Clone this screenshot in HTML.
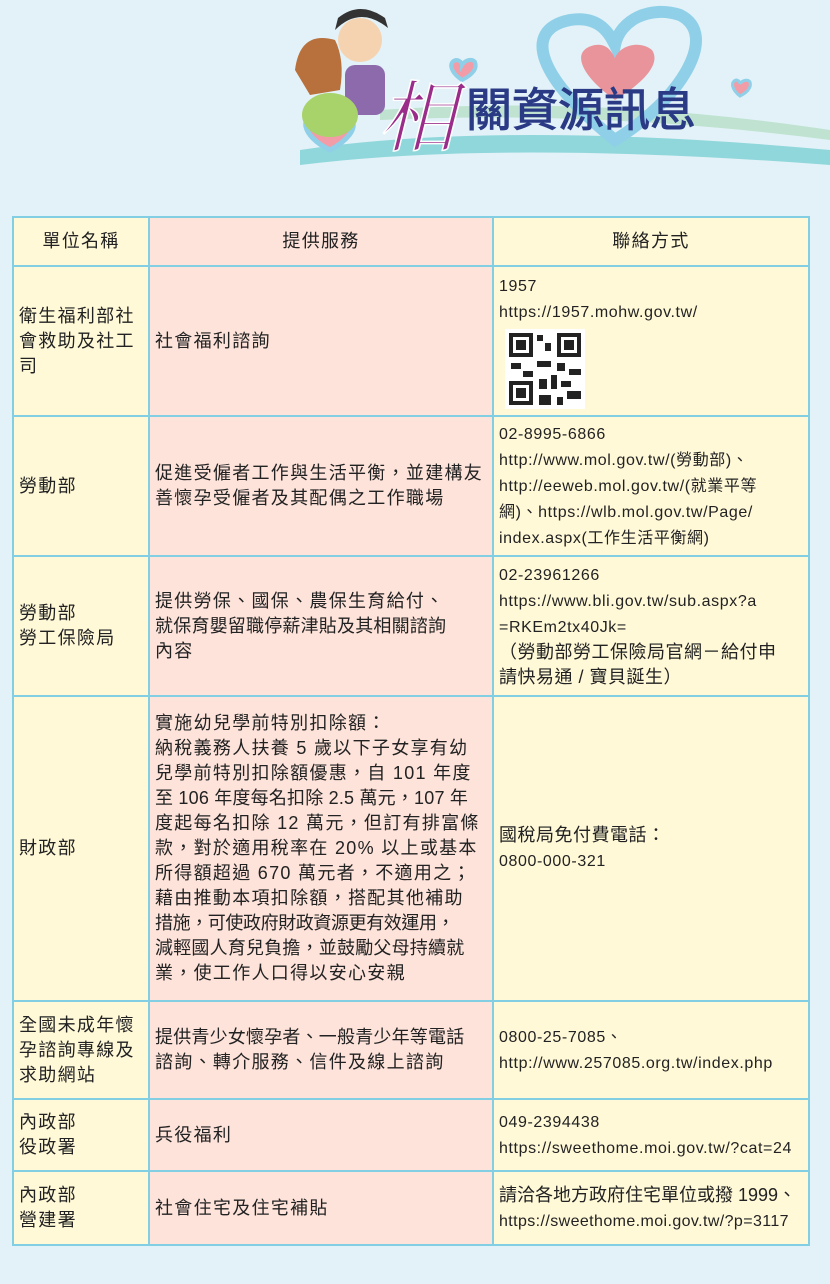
<!DOCTYPE html>
<html><head><meta charset="utf-8">
<style>
body{margin:0;width:830px;height:1284px;background:#e2f2f8;font-family:"Liberation Sans","Noto Sans CJK TC",sans-serif;color:#222;position:relative;overflow:hidden}
table{position:absolute;left:12px;top:216px;width:798px;border-collapse:collapse;table-layout:fixed}
td{border:2px solid #82cfe4;font-size:18px;line-height:25px;vertical-align:middle;padding:0 5px;letter-spacing:1.3px;white-space:nowrap;overflow:hidden}
td.a{background:#fff9d8;width:124px}
td.b{background:#fde3da;width:332px}
td.c{background:#fff9d8;letter-spacing:0.5px}
tr.h td{text-align:center;font-size:18px}
.u{font-size:16px;letter-spacing:0.6px}
.t{letter-spacing:0.2px}
</style></head><body>
<svg width="830" height="200" style="position:absolute;left:0;top:0">
<path d="M300 150 Q500 120 830 150 L830 165 Q500 140 300 165Z" fill="#7ccfd3" opacity=".8"/>
<path d="M380 110 Q600 95 830 130 L830 140 Q600 110 380 120Z" fill="#bfe3d0"/>
<path d="M615 140 C540 80 520 30 570 20 C600 15 610 35 615 45 C620 20 650 5 680 15 C720 35 680 100 615 140Z" fill="none" stroke="#8fd0e8" stroke-width="12"/>
<path d="M615 100 C580 75 570 50 595 45 C607 43 612 52 615 58 C620 45 640 40 652 50 C662 65 640 85 615 100Z" fill="#e9949a"/>
<path d="M330 150 C300 135 300 115 318 115 C326 115 330 122 330 125 C333 118 342 113 350 118 C360 128 345 142 330 150Z" fill="#f29ca8" stroke="#8fd0e8" stroke-width="5"/>
<path d="M462 80 C450 72 448 62 456 60 C460 60 462 63 462 65 C465 60 472 58 475 62 C478 70 470 76 462 80Z" fill="#f29ca8" stroke="#8fd0e8" stroke-width="4"/>
<path d="M740 96 C732 90 730 82 736 80 C739 80 740 83 740 84 C742 80 748 79 750 82 C752 88 746 93 740 96Z" fill="#f29ca8" stroke="#8fd0e8" stroke-width="3"/>
<circle cx="360" cy="40" r="22" fill="#f5d3b0"/><path d="M335 30 Q360 5 388 28 L385 18 Q360 0 338 18Z" fill="#333"/>
<path d="M295 70 Q300 30 335 40 Q345 60 340 90 L310 95Z" fill="#b8703c"/>
<rect x="345" y="65" width="40" height="50" rx="10" fill="#8c6aab"/>
<ellipse cx="330" cy="115" rx="28" ry="22" fill="#a8d26a"/>
<text x="378" y="145" font-family="Liberation Serif,Noto Serif CJK SC,serif" font-size="78" fill="#9a2d8a" font-style="italic" stroke="#fff" stroke-width="1.5">相</text>
<text x="466" y="126" font-family="Liberation Sans,Noto Sans CJK TC,sans-serif" font-size="46" fill="#2a3a85" stroke="#2a3a85" stroke-width="1">關資源訊息</text>
</svg>
<table>
<tr class="h" style="height:49px"><td class="a">單位名稱</td><td class="b">提供服務</td><td class="c" style="text-align:center;letter-spacing:1.4px;font-size:18px">聯絡方式</td></tr>
<tr style="height:150px"><td class="a">衛生福利部社<br>會救助及社工<br>司</td><td class="b">社會福利諮詢</td><td class="c"><span class="u">1957<br>https://1957.mohw.gov.tw/</span><br>
<svg width="80" height="80" style="margin:4px 0 0 6px;display:block"><rect width="80" height="80" fill="#fff"/><rect x="4" y="4" width="24" height="24" fill="#222"/><rect x="8" y="8" width="16" height="16" fill="#fff"/><rect x="11" y="11" width="10" height="10" fill="#222"/><rect x="52" y="4" width="24" height="24" fill="#222"/><rect x="56" y="8" width="16" height="16" fill="#fff"/><rect x="59" y="11" width="10" height="10" fill="#222"/><rect x="4" y="52" width="24" height="24" fill="#222"/><rect x="8" y="56" width="16" height="16" fill="#fff"/><rect x="11" y="59" width="10" height="10" fill="#222"/><path d="M32 6h6v6h-6zM40 14h6v8h-6zM32 32h14v6h-14zM52 34h8v8h-8zM64 40h12v6h-12zM34 50h8v10h-8zM46 46h6v14h-6zM56 52h10v6h-10zM62 62h14v8h-14zM34 66h12v10h-12zM52 68h6v8h-6zM6 34h10v6h-10zM18 42h10v6h-10z" fill="#222"/></svg></td></tr>
<tr style="height:140px"><td class="a">勞動部</td><td class="b">促進受僱者工作與生活平衡，並建構友<br>善懷孕受僱者及其配偶之工作職場</td><td class="c"><span class="u">02-8995-6866<br>http://www.mol.gov.tw/(勞動部)、<br>http://eeweb.mol.gov.tw/(就業平等<br>網)、https://wlb.mol.gov.tw/Page/<br>index.aspx(工作生活平衡網)</span></td></tr>
<tr style="height:140px"><td class="a">勞動部<br>勞工保險局</td><td class="b">提供勞保、國保、農保生育給付、<br><span class="t">就保育嬰留職停薪津貼及其相關諮詢</span><br>內容</td><td class="c"><span class="u">02-23961266<br>https://www.bli.gov.tw/sub.aspx?a<br>=RKEm2tx40Jk=</span><br>（勞動部勞工保險局官網－給付申<br>請快易通 / 寶貝誕生）</td></tr>
<tr style="height:305px"><td class="a">財政部</td><td class="b">實施幼兒學前特別扣除額：<br>納稅義務人扶養 5 歲以下子女享有幼<br>兒學前特別扣除額優惠，自 101 年度<br><span class="t">至 106 年度每名扣除 2.5 萬元，107 年</span><br>度起每名扣除 12 萬元，但訂有排富條<br>款，對於適用稅率在 20% 以上或基本<br>所得額超過 670 萬元者，不適用之；<br>藉由推動本項扣除額，搭配其他補助<br><span style="letter-spacing:-0.4px">措施，可使政府財政資源更有效運用，</span><br><span class="t">減輕國人育兒負擔，並鼓勵父母持續就</span><br>業，使工作人口得以安心安親</td><td class="c">國稅局免付費電話：<br><span class="u">0800-000-321</span></td></tr>
<tr style="height:98px"><td class="a">全國未成年懷<br>孕諮詢專線及<br>求助網站</td><td class="b"><span class="t">提供青少女懷孕者、一般青少年等電話</span><br>諮詢、轉介服務、信件及線上諮詢</td><td class="c"><span class="u">0800-25-7085、<br>http://www.257085.org.tw/index.php</span></td></tr>
<tr style="height:72px"><td class="a">內政部<br>役政署</td><td class="b">兵役福利</td><td class="c"><span class="u">049-2394438<br>https://sweethome.moi.gov.tw/?cat=24</span></td></tr>
<tr style="height:74px"><td class="a">內政部<br>營建署</td><td class="b">社會住宅及住宅補貼</td><td class="c" style="letter-spacing:0">請洽各地方政府住宅單位或撥 1999、<br><span class="u" style="letter-spacing:0.4px">https://sweethome.moi.gov.tw/?p=3117</span></td></tr>
</table>
</body></html>
